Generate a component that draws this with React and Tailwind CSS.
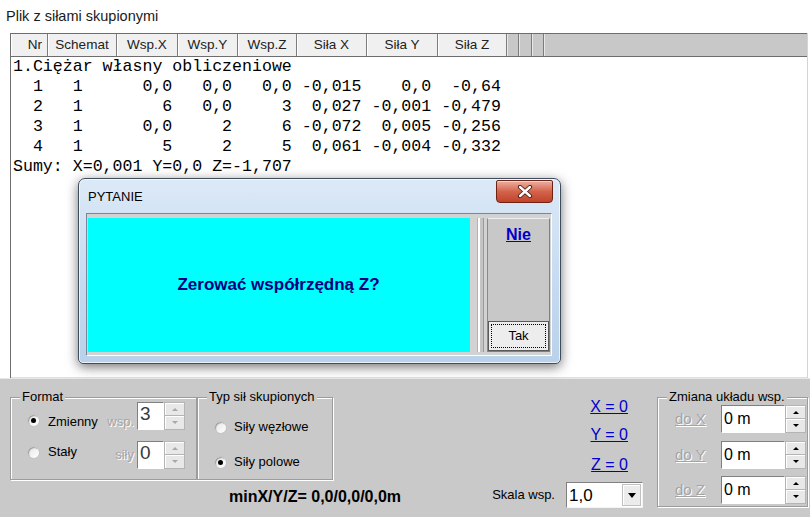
import React from 'react';

const headers = [
  { t: 'Nr', w: 'w-[37px] justify-end pr-[5px]' },
  { t: 'Schemat', w: 'w-[69px] justify-center' },
  { t: 'Wsp.X', w: 'w-[61px] justify-center' },
  { t: 'Wsp.Y', w: 'w-[60px] justify-center' },
  { t: 'Wsp.Z', w: 'w-[59px] justify-center' },
  { t: 'Siła X', w: 'w-[70px] justify-center' },
  { t: 'Siła Y', w: 'w-[71px] justify-center' },
  { t: 'Siła Z', w: 'w-[69px] justify-center' },
];

const lines = [
  '1.Ciężar własny obliczeniowe',
  '  1   1      0,0   0,0   0,0 -0,015    0,0  -0,64',
  '  2   1        6   0,0     3  0,027 -0,001 -0,479',
  '  3   1      0,0     2     6 -0,072  0,005 -0,256',
  '  4   1        5     2     5  0,061 -0,004 -0,332',
  'Sumy: X=0,001 Y=0,0 Z=-1,707',
];

const Radio = ({ checked, className }) => (
  <div className={`relative flex items-center justify-center w-[13px] h-[13px] shrink-0 rounded-full bg-linear-to-br from-[#e6e6e6] to-white border border-[#c4c4c4] shadow-[inset_1px_1px_1px_#9a9a9a] ${className || ''}`}>
    {checked && <div className="w-[5px] h-[5px] rounded-full bg-black" />}
  </div>
);

const Arrow = ({ up, dim }) =>
  up ? (
    <div className={`w-0 h-0 border-x-[3px] border-x-transparent border-b-[3px] ${dim ? 'border-b-[#a8a8a8]' : 'border-b-black'}`} />
  ) : (
    <div className={`w-0 h-0 border-x-[3px] border-x-transparent border-t-[3px] ${dim ? 'border-t-[#a8a8a8]' : 'border-t-black'}`} />
  );

const Spinner = ({ dim }) => (
  <div className="flex flex-col w-[21px] h-[28px] shrink-0">
    <div className="flex items-center justify-center h-[14px] bg-[#e8e8e8] border border-[#b4b4b4] shadow-[inset_1px_1px_0_#fff]">
      <Arrow up dim={dim} />
    </div>
    <div className="flex items-center justify-center h-[14px] bg-[#e8e8e8] border border-t-0 border-[#b4b4b4] shadow-[inset_1px_1px_0_#fff]">
      <Arrow dim={dim} />
    </div>
  </div>
);

const disabledText = 'text-[#a4a4a4] [text-shadow:1px_1px_0_#ffffff]';

export default function App() {
  return (
    <div className="relative w-[810px] h-[517px] overflow-hidden bg-white font-['Liberation_Sans',Arial,sans-serif] text-black">
      {/* title */}
      <div className="h-[33px] pl-[6px] pt-[7px] text-[14.5px] leading-[18px] text-[#1a1a1a]">Plik z siłami skupionymi</div>

      {/* grid */}
      <div className="ml-[10px] mr-[2px] h-[345px] flex flex-col border-l border-r border-l-[#6e6e6e] border-r-[#d4d4d4]">
        <div className="flex h-[24px] border-t border-b border-[#6d6d6d] bg-[#c8c8c8] text-[13.5px] text-[#222]">
          {headers.map((h) => (
            <div key={h.t} className={`flex items-center h-full bg-[#f0f0f0] border-r border-[#7c7c7c] shadow-[inset_1px_0_0_#fff] ${h.w}`}>
              {h.t}
            </div>
          ))}
          <div className="w-[12px] h-full border-r border-[#7c7c7c] shadow-[inset_1px_0_0_#e8e8e8]" />
          <div className="w-[13px] h-full border-r border-[#7c7c7c] shadow-[inset_1px_0_0_#e8e8e8]" />
          <div className="w-[12px] h-full border-r border-[#7c7c7c] shadow-[inset_1px_0_0_#e8e8e8]" />
          <div className="flex-1 h-full shadow-[inset_1px_0_0_#e8e8e8]" />
        </div>
        <pre className="flex-1 m-0 pl-[2px] bg-white font-['Liberation_Mono','Courier_New',monospace] text-[16.6px] leading-[20px] text-black border-b border-[#e0e0e0]">
          {lines.join('\n')}
        </pre>
      </div>

      {/* bottom panel */}
      <div className="flex h-[139px] bg-[#c9c9c9] border-t border-[#e6e6e6] pl-[10px] text-[13px]">
        {/* Format */}
        <div className="relative mt-[18px] w-[187px] h-[83px] shrink-0 border border-[#9c9c9c] shadow-[inset_1px_1px_0_#fff,1px_1px_0_#fff]">
          <span className="absolute left-[9px] -top-[9px] px-[2px] bg-[#c9c9c9] leading-[16px]">Format</span>
          <div className="flex flex-col pl-[16px] pt-[4px]">
            <div className="flex items-start h-[28px]">
              <Radio checked className="mt-[12px]" />
              <div className="ml-[8px] w-[59px] mt-[12px] leading-[16px]">Zmienny</div>
              <div className={`w-[30px] mt-[12px] leading-[16px] text-right pr-[3px] ${disabledText}`}>wsp.</div>
              <div className="w-[27px] h-[28px] shrink-0 bg-white border border-t-[#808080] border-l-[#808080] border-b-white border-r-white text-[19px] leading-none pl-[2px] pt-[1px] text-[#3a3a3a]">3</div>
              <Spinner dim />
            </div>
            <div className="flex items-start h-[28px] mt-[11px]">
              <Radio className="mt-[5px]" />
              <div className="ml-[8px] w-[59px] mt-[3px] leading-[16px]">Stały</div>
              <div className={`w-[30px] mt-[6px] leading-[16px] text-right pr-[3px] ${disabledText}`}>siły</div>
              <div className="w-[27px] h-[28px] shrink-0 bg-white border border-t-[#808080] border-l-[#808080] border-b-white border-r-white text-[19px] leading-none pl-[2px] pt-[1px] text-[#3a3a3a]">0</div>
              <Spinner dim />
            </div>
          </div>
        </div>

        {/* Typ sił */}
        <div className="flex flex-col w-[136px] shrink-0">
          <div className="relative mt-[18px] h-[83px] border border-[#9c9c9c] shadow-[inset_1px_1px_0_#fff,1px_1px_0_#fff]">
            <span className="absolute left-[9px] -top-[9px] px-[2px] bg-[#c9c9c9] leading-[16px]">Typ sił skupionych</span>
            <div className="flex flex-col pl-[16px] pt-[21px]">
              <div className="flex items-center h-[16px] gap-[7px]">
                <Radio />
                <span className="leading-[16px]">Siły węzłowe</span>
              </div>
              <div className="flex items-center h-[16px] gap-[7px] mt-[19px]">
                <Radio checked />
                <span className="leading-[16px]">Siły polowe</span>
              </div>
            </div>
          </div>
          <div className="mt-[8px] ml-[32px] whitespace-nowrap font-bold text-[16px] leading-[18px]">minX/Y/Z= 0,0/0,0/0,0m</div>
        </div>

        {/* links + skala */}
        <div className="flex flex-col items-end w-[323px] shrink-0">
          <a className="mt-[19px] mr-[28px] leading-[18px] text-[16px] text-[#0000cc] underline">X = 0</a>
          <a className="mt-[10px] mr-[28px] leading-[18px] text-[16px] text-[#0000cc] underline">Y = 0</a>
          <a className="mt-[12px] mr-[28px] leading-[18px] text-[16px] text-[#0000cc] underline">Z = 0</a>
          <div className="flex items-center h-[26px] mt-[8px] mr-[13px] gap-[11px]">
            <span className="leading-[16px]">Skala wsp.</span>
            <div className="flex items-center w-[77px] h-[26px] bg-white border border-t-[#808080] border-l-[#808080] border-b-[#f4f4f4] border-r-[#f4f4f4]">
              <span className="flex-1 pl-[2px] text-[17px] leading-none">1,0</span>
              <div className="flex items-center justify-center w-[19px] h-[22px] mr-[1px] bg-[#ececec] border border-[#c0c0c0] shadow-[inset_1px_1px_0_#fff]">
                <div className="w-0 h-0 border-x-[4px] border-x-transparent border-t-[5px] border-t-black" />
              </div>
            </div>
          </div>
        </div>

        {/* Zmiana układu */}
        <div className="relative mt-[18px] ml-[1px] w-[151px] h-[110px] shrink-0 border border-[#9c9c9c] shadow-[inset_1px_1px_0_#fff,1px_1px_0_#fff]">
          <span className="absolute left-[9px] -top-[9px] px-[2px] bg-[#c9c9c9] leading-[16px]">Zmiana układu wsp.</span>
          <div className="flex flex-col pl-[17px] pt-[7px]">
            {[
              { l: 'do X', m: '' },
              { l: 'do Y', m: 'mt-[8px]' },
              { l: 'do Z', m: 'mt-[7px]' },
            ].map((r) => (
              <div key={r.l} className={`flex items-center h-[28px] ${r.m}`}>
                <span className={`w-[46px] text-[15px] leading-[18px] underline ${disabledText}`}>{r.l}</span>
                <div className="flex items-center w-[64px] h-[28px] bg-white border border-t-[#808080] border-l-[#808080] border-b-white border-r-white text-[16px] pl-[2px]">0 m</div>
                <Spinner />
              </div>
            ))}
          </div>
        </div>
      </div>

      {/* dialog */}
      <div className="absolute left-[78px] top-[178px] w-[483px] h-[186px] flex flex-col rounded-t-[7px] rounded-b-[5px] border border-[#3e4d5e] bg-linear-to-b from-[#dce9f7] via-[#c8dcf2] to-[#b9d1ea] shadow-[0_3px_12px_rgba(0,0,0,0.55),inset_0_0_0_1px_rgba(255,255,255,0.7)]">
        <div className="flex items-start h-[34px]">
          <span className="pl-[9px] pt-[10px] text-[13px] leading-[16px] text-black">PYTANIE</span>
          <div className="ml-auto mr-[7px] mt-[1px] flex items-center justify-center w-[57px] h-[23px] rounded-b-[4px] rounded-t-[2px] border border-[#6c2215] bg-linear-to-b from-[#eab0a2] via-[#d4634b] to-[#c0432a] shadow-[inset_0_1px_0_rgba(255,255,255,0.5)]">
            <svg width="16" height="13" viewBox="0 0 16 13">
              <path d="M3 2 L13 11 M13 2 L3 11" stroke="#4a1a10" strokeWidth="4.2" strokeLinecap="round" />
              <path d="M3 2 L13 11 M13 2 L3 11" stroke="#ffffff" strokeWidth="2.4" strokeLinecap="round" />
            </svg>
          </div>
        </div>
        <div className="ml-[7px] w-[466px] h-[143px] flex pt-[4px] pl-[1px] bg-[#d2d2d2] border border-t-[#7a8796] border-l-[#7a8796] border-b-white border-r-white">
          <div className="flex items-center justify-center w-[382px] h-[134px] bg-[#00ffff]">
            <span className="font-bold text-[17px] text-[#000080] ml-[-1px]">Zerować współrzędną Z?</span>
          </div>
          <div className="flex w-[17px] h-[134px]">
            <div className="ml-[7px] w-[1px] h-full bg-[#b4b4b4]" />
            <div className="w-[2px] h-full bg-white" />
            <div className="w-[3px] h-full bg-[#c4c4c4]" />
            <div className="w-[1px] h-full bg-[#9a9a9a]" />
          </div>
          <div className="flex flex-col justify-between items-center w-[63px] h-[134px] bg-[#c8c8c8] border border-t-[#eeeeee] border-l-[#8a8a8a] border-b-[#808080] border-r-[#808080]">
            <a className="mt-[7px] font-bold text-[16px] leading-[18px] text-[#0000cc] underline">Nie</a>
            <div className="flex items-center justify-center w-full h-[30px] bg-[#ededed] border border-[#5a5a5a] p-[2px]">
              <div className="flex items-center justify-center w-full h-full border border-dotted border-black text-[13px]">Tak</div>
            </div>
          </div>
        </div>
      </div>
    </div>
  );
}
